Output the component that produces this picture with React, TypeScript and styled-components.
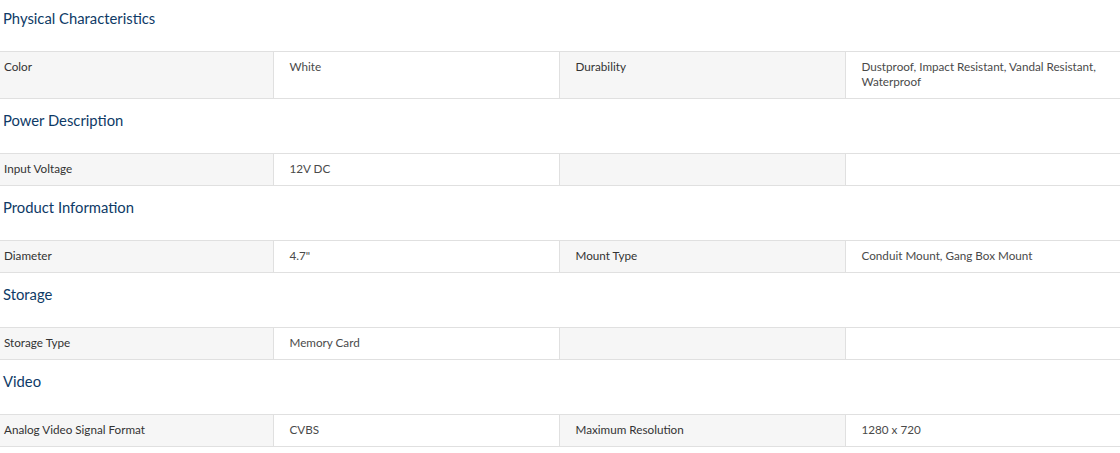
import React from "react";
import styled, { createGlobalStyle } from "styled-components";

const Global = createGlobalStyle`
  html, body { margin: 0; padding: 0; background: #fff; }
  body { font-family: Lato, "Noto Sans", Arial, sans-serif; }
  * { box-sizing: border-box; }
`;

const Page = styled.div`
  width: 1120px;
  display: flex;
  flex-direction: column;
`;

const Section = styled.section`
  display: flex;
  flex-direction: column;
  margin-bottom: 3px;
`;

const Heading = styled.h3`
  margin: 0;
  padding: 8px 0 0 3px;
  height: 51px;
  font-size: 14.8px;
  line-height: 20px;
  font-weight: 400;
  color: #0e3a66;
`;

const Table = styled.table`
  width: 1120px;
  border-collapse: collapse;
  table-layout: fixed;
`;

const Cell = styled.td<{ $label?: boolean; $first?: boolean }>`
  border-top: 1px solid #e0e0e0;
  border-bottom: 1px solid #e0e0e0;
  border-left: ${(p) => (p.$first ? "none" : "1px solid #e0e0e0")};
  background: ${(p) => (p.$label ? "#f6f6f6" : "#fff")};
  color: ${(p) => (p.$label ? "#333" : "#4a4a4a")};
  font-size: 11.7px;
  line-height: 15px;
  padding: 7px 16px 9px ${(p) => (p.$first ? "4px" : "16px")};
  vertical-align: top;
  height: 32px;
`;

type Row = [string, string, string, string];

const sections: { title: string; rows: Row[] }[] = [
  {
    title: "Physical Characteristics",
    rows: [["Color", "White", "Durability", "Dustproof, Impact Resistant, Vandal Resistant, Waterproof"]],
  },
  { title: "Power Description", rows: [["Input Voltage", "12V DC", "", ""]] },
  {
    title: "Product Information",
    rows: [["Diameter", "4.7\"", "Mount Type", "Conduit Mount, Gang Box Mount"]],
  },
  { title: "Storage", rows: [["Storage Type", "Memory Card", "", ""]] },
  {
    title: "Video",
    rows: [["Analog Video Signal Format", "CVBS", "Maximum Resolution", "1280 x 720"]],
  },
];

export default function App() {
  return (
    <>
      <Global />
      <Page>
        {sections.map((s) => (
          <Section key={s.title}>
            <Heading>{s.title}</Heading>
            <Table>
              <colgroup>
                <col style={{ width: 273 }} />
                <col style={{ width: 286 }} />
                <col style={{ width: 286 }} />
                <col style={{ width: 275 }} />
              </colgroup>
              <tbody>
                {s.rows.map((r, i) => (
                  <tr key={i}>
                    <Cell $label $first>{r[0]}</Cell>
                    <Cell>{r[1]}</Cell>
                    <Cell $label>{r[2]}</Cell>
                    <Cell>{r[3]}</Cell>
                  </tr>
                ))}
              </tbody>
            </Table>
          </Section>
        ))}
      </Page>
    </>
  );
}
